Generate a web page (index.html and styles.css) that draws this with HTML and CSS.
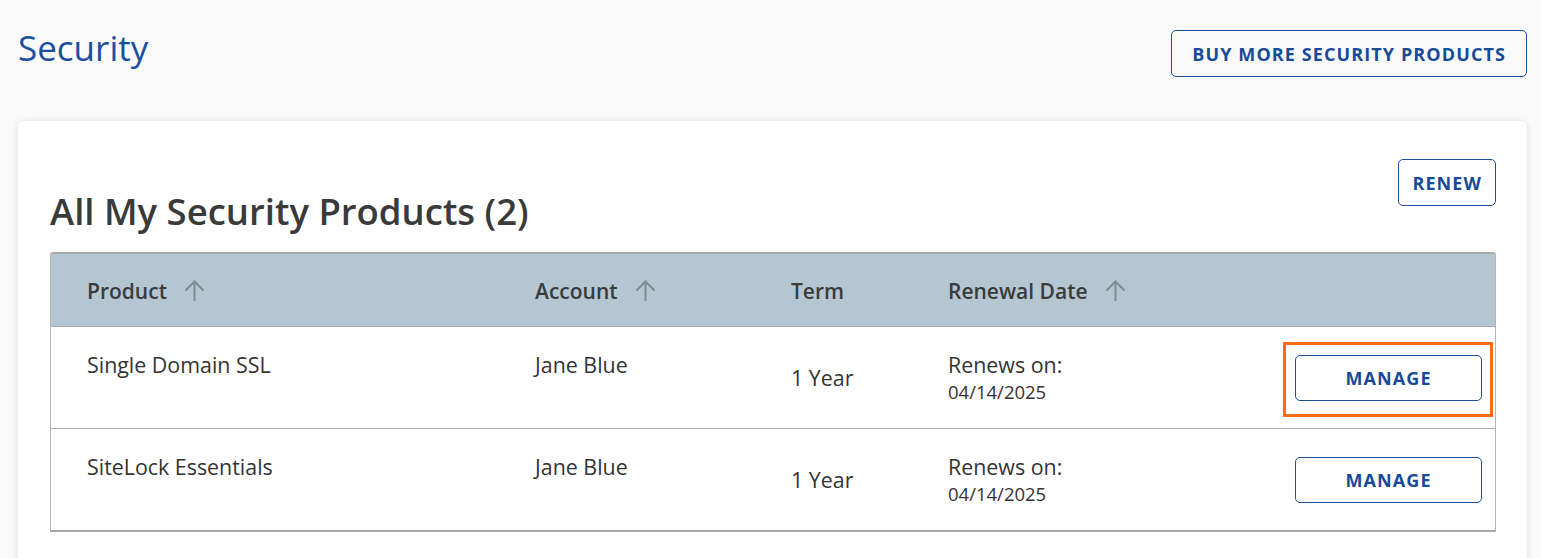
FILE: index.html
```html
<!DOCTYPE html>
<html lang="en">
<head>
    <meta charset="UTF-8">
    <meta name="viewport" content="width=device-width, initial-scale=1.0">
    <title>Security</title>
    <link rel="stylesheet" href="styles.css">
</head>
<body>

    <!-- Page header -->
    <div class="page-head">
        <h1 class="page-title">Security</h1>
        <button class="outline-btn buy-btn">Buy More Security Products</button>
    </div>

    <!-- Products card -->
    <div class="card">
        <div class="card-head">
            <h2 class="card-title">All My Security Products (2)</h2>
            <button class="outline-btn renew-btn">Renew</button>
        </div>

        <div class="product-table">
            <div class="table-row table-header">
                <div class="cell">Product
                    <svg class="sort-icon" viewBox="0 0 21 21"><path d="M10.5 21V1.5M1.5 10.5l9-9 9 9"/></svg>
                </div>
                <div class="cell">Account
                    <svg class="sort-icon" viewBox="0 0 21 21"><path d="M10.5 21V1.5M1.5 10.5l9-9 9 9"/></svg>
                </div>
                <div class="cell">Term</div>
                <div class="cell">Renewal Date
                    <svg class="sort-icon" viewBox="0 0 21 21"><path d="M10.5 21V1.5M1.5 10.5l9-9 9 9"/></svg>
                </div>
                <div class="cell"></div>
            </div>

            <!-- Row 1 -->
            <div class="table-row">
                <div class="cell cell-top">Single Domain SSL</div>
                <div class="cell cell-top">Jane Blue</div>
                <div class="cell">1 Year</div>
                <div class="cell">
                    <div class="renew-label">Renews on:</div>
                    <div class="renew-date">04/14/2025</div>
                </div>
                <div class="cell cell-action">
                    <span class="highlight">
                        <button class="outline-btn manage-btn">Manage</button>
                    </span>
                </div>
            </div>

            <!-- Row 2 -->
            <div class="table-row">
                <div class="cell cell-top">SiteLock Essentials</div>
                <div class="cell cell-top">Jane Blue</div>
                <div class="cell">1 Year</div>
                <div class="cell">
                    <div class="renew-label">Renews on:</div>
                    <div class="renew-date">04/14/2025</div>
                </div>
                <div class="cell cell-action">
                    <button class="outline-btn manage-btn">Manage</button>
                </div>
            </div>
        </div>
    </div>

</body>
</html>
```

FILE: styles.css
```css
* {
    box-sizing: border-box;
}
body {
    font-family: "Open Sans", Arial, sans-serif;
    margin: 0;
    padding: 30px 14px 0 18px;
    background-color: #f9f9f9;
    color: #333;
    overflow: hidden;
}
.page-head {
    display: flex;
    justify-content: space-between;
    align-items: flex-start;
    margin-bottom: 44px;
}
.page-title {
    margin: 0;
    font-size: 35px;
    line-height: 1;
    font-weight: 400;
    color: #1b4f9e;
}
.outline-btn {
    font-family: "Open Sans", Arial, sans-serif;
    background-color: transparent;
    border: 1px solid #1c4f9c;
    border-radius: 5px;
    color: #174a97;
    font-size: 18px;
    font-weight: 700;
    letter-spacing: 1.1px;
    text-transform: uppercase;
    cursor: pointer;
}
.buy-btn {
    height: 47px;
    padding: 0 20px;
}
.card {
    background-color: white;
    border-radius: 6px;
    box-shadow: 0 1px 6px rgba(0, 0, 0, 0.12);
    padding: 38px 31px 40px 32px;
}
.card-head {
    display: flex;
    justify-content: space-between;
    align-items: flex-start;
}
.card-title {
    margin: 27px 0 16px;
    font-size: 36.5px;
    font-weight: 600;
    color: #3a3a3a;
}
.renew-btn {
    height: 47px;
    padding: 0 13px;
}
.product-table {
    border: 1px solid #b5b5b5;
    border-top: 2px solid #a8a8a8;
    border-bottom: 2px solid #a8a8a8;
    border-radius: 3px 3px 0 0;
}
.table-row {
    display: grid;
    grid-template-columns: 448px 256px 157px 1fr auto;
    height: 102px;
    padding-left: 36px;
    border-top: 1px solid #a8a8a8;
    align-items: center;
    font-size: 21.4px;
    color: #333;
}
.table-row.table-header {
    height: 72px;
    padding-top: 1px;
    border-top: none;
    background-color: #b4c6d1;
    font-size: 21px;
    font-weight: 600;
    color: #3b3b3b;
}
.cell {
    display: flex;
    flex-direction: column;
    justify-content: center;
}
.table-header .cell {
    flex-direction: row;
    align-items: center;
    justify-content: flex-start;
}
.sort-icon {
    width: 21px;
    height: 21px;
    margin-left: 17px;
    fill: none;
    stroke: #7d8c96;
    stroke-width: 2;
}
.cell-top {
    align-self: start;
    padding-top: 23px;
}
.renew-label {
    line-height: 28px;
}
.renew-date {
    font-size: 18.5px;
    line-height: 25px;
}
.cell-action {
    flex-direction: row;
    justify-content: flex-end;
    padding-right: 13px;
}
.manage-btn {
    width: 187px;
    height: 46px;
    background-color: white;
}
.highlight {
    position: relative;
    display: inline-flex;
}
.highlight::after {
    content: "";
    position: absolute;
    top: -13px;
    left: -12px;
    right: -11px;
    bottom: -16px;
    border: 3px solid #ff6a13;
    pointer-events: none;
}
```
